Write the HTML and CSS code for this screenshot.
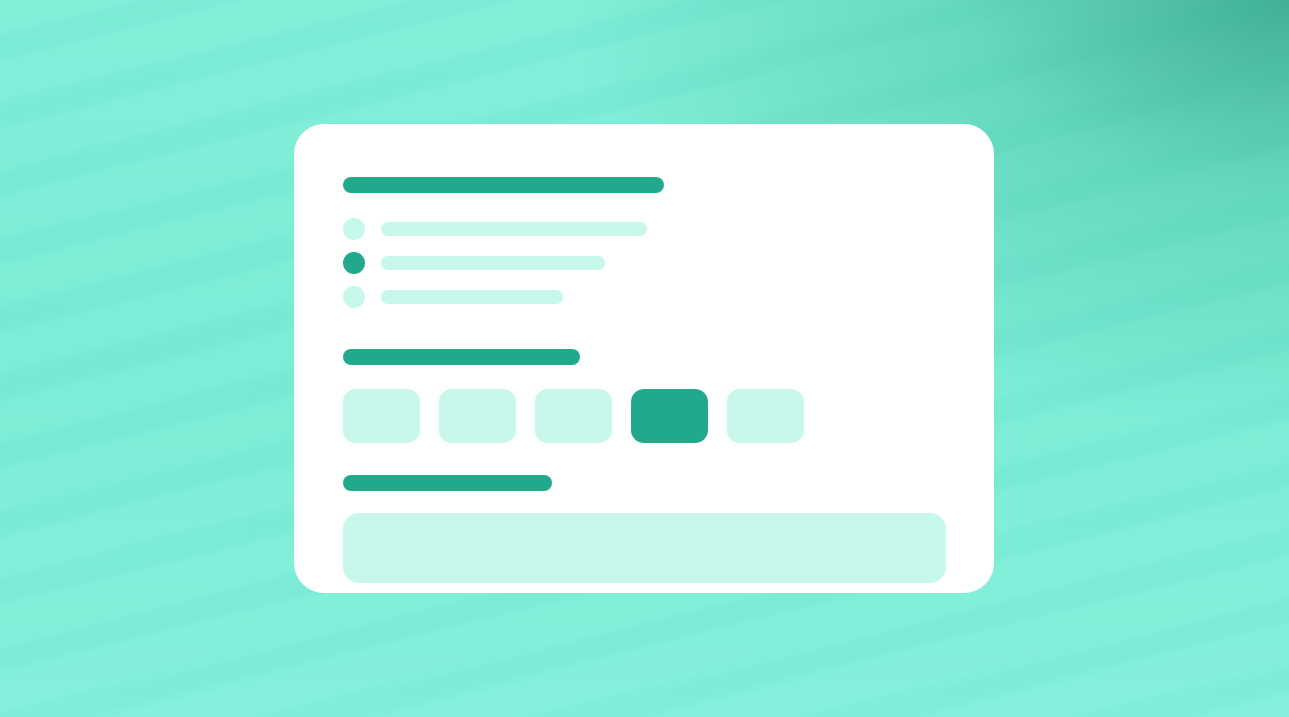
FILE: index.html
```html
<!DOCTYPE html>
<html lang="en">
<head>
<meta charset="utf-8">
<title>Form preview</title>
<link rel="stylesheet" href="styles.css">
</head>
<body>
<main class="stage">
  <section class="card">
    <div class="bar bar-title"></div>
    <ul class="options">
      <li class="option"><span class="dot"></span><span class="line line-1"></span></li>
      <li class="option"><span class="dot dot-active"></span><span class="line line-2"></span></li>
      <li class="option"><span class="dot"></span><span class="line line-3"></span></li>
    </ul>
    <div class="bar bar-section"></div>
    <div class="chips">
      <span class="chip"></span>
      <span class="chip"></span>
      <span class="chip"></span>
      <span class="chip chip-active"></span>
      <span class="chip"></span>
    </div>
    <div class="bar bar-field"></div>
    <div class="field"></div>
  </section>
</main>
</body>
</html>
```

FILE: styles.css
```css
html, body {
  margin: 0;
  padding: 0;
}
body {
  width: 1289px;
  height: 717px;
  overflow: hidden;
  font-family: "Liberation Sans", Arial, sans-serif;
}
.stage {
  box-sizing: border-box;
  width: 1289px;
  height: 717px;
  padding-right: 1px;
  display: flex;
  align-items: center;
  justify-content: center;
  background:
    repeating-linear-gradient(-14deg,
      rgba(40, 190, 160, 0) 0px,
      rgba(40, 190, 160, 0) 20px,
      rgba(40, 190, 160, 0.07) 30px,
      rgba(40, 190, 160, 0.07) 44px,
      rgba(40, 190, 160, 0) 56px,
      rgba(40, 190, 160, 0) 66px),
    radial-gradient(ellipse 720px 430px at 100% 0%, rgba(62, 172, 146, 0.95) 0%, rgba(80, 200, 172, 0.55) 45%, rgba(120, 230, 205, 0) 100%),
    linear-gradient(180deg, #82efd9 0%, #7cedd6 50%, #85f0db 100%);
}
.card {
  box-sizing: border-box;
  width: 700px;
  height: 469px;
  background: #ffffff;
  border-radius: 30px;
  padding: 53px 48px 0 49px;
  display: flex;
  flex-direction: column;
}
.bar {
  height: 16px;
  border-radius: 8px;
  background: #22a98b;
}
.bar-title { width: 321px; }
.bar-section { width: 237px; margin-top: 41px; }
.bar-field { width: 209px; margin-top: 32px; }

.options {
  list-style: none;
  margin: 25px 0 0 0;
  padding: 0;
  display: flex;
  flex-direction: column;
  gap: 12px;
}
.option {
  display: flex;
  align-items: center;
  gap: 16px;
  height: 22px;
}
.dot {
  width: 22px;
  height: 22px;
  border-radius: 50%;
  background: #c8f7eb;
  flex: none;
}
.dot-active { background: #22a98b; }
.line {
  height: 14px;
  border-radius: 7px;
  background: #c8f7eb;
}
.line-1 { width: 266px; }
.line-2 { width: 224px; }
.line-3 { width: 182px; }

.chips {
  display: flex;
  gap: 19px;
  margin-top: 24px;
}
.chip {
  width: 77px;
  height: 54px;
  border-radius: 13px;
  background: #c8f7eb;
}
.chip-active { background: #22a98b; }

.field {
  margin-top: 22px;
  height: 70px;
  border-radius: 16px;
  background: #c8f7eb;
}
```
